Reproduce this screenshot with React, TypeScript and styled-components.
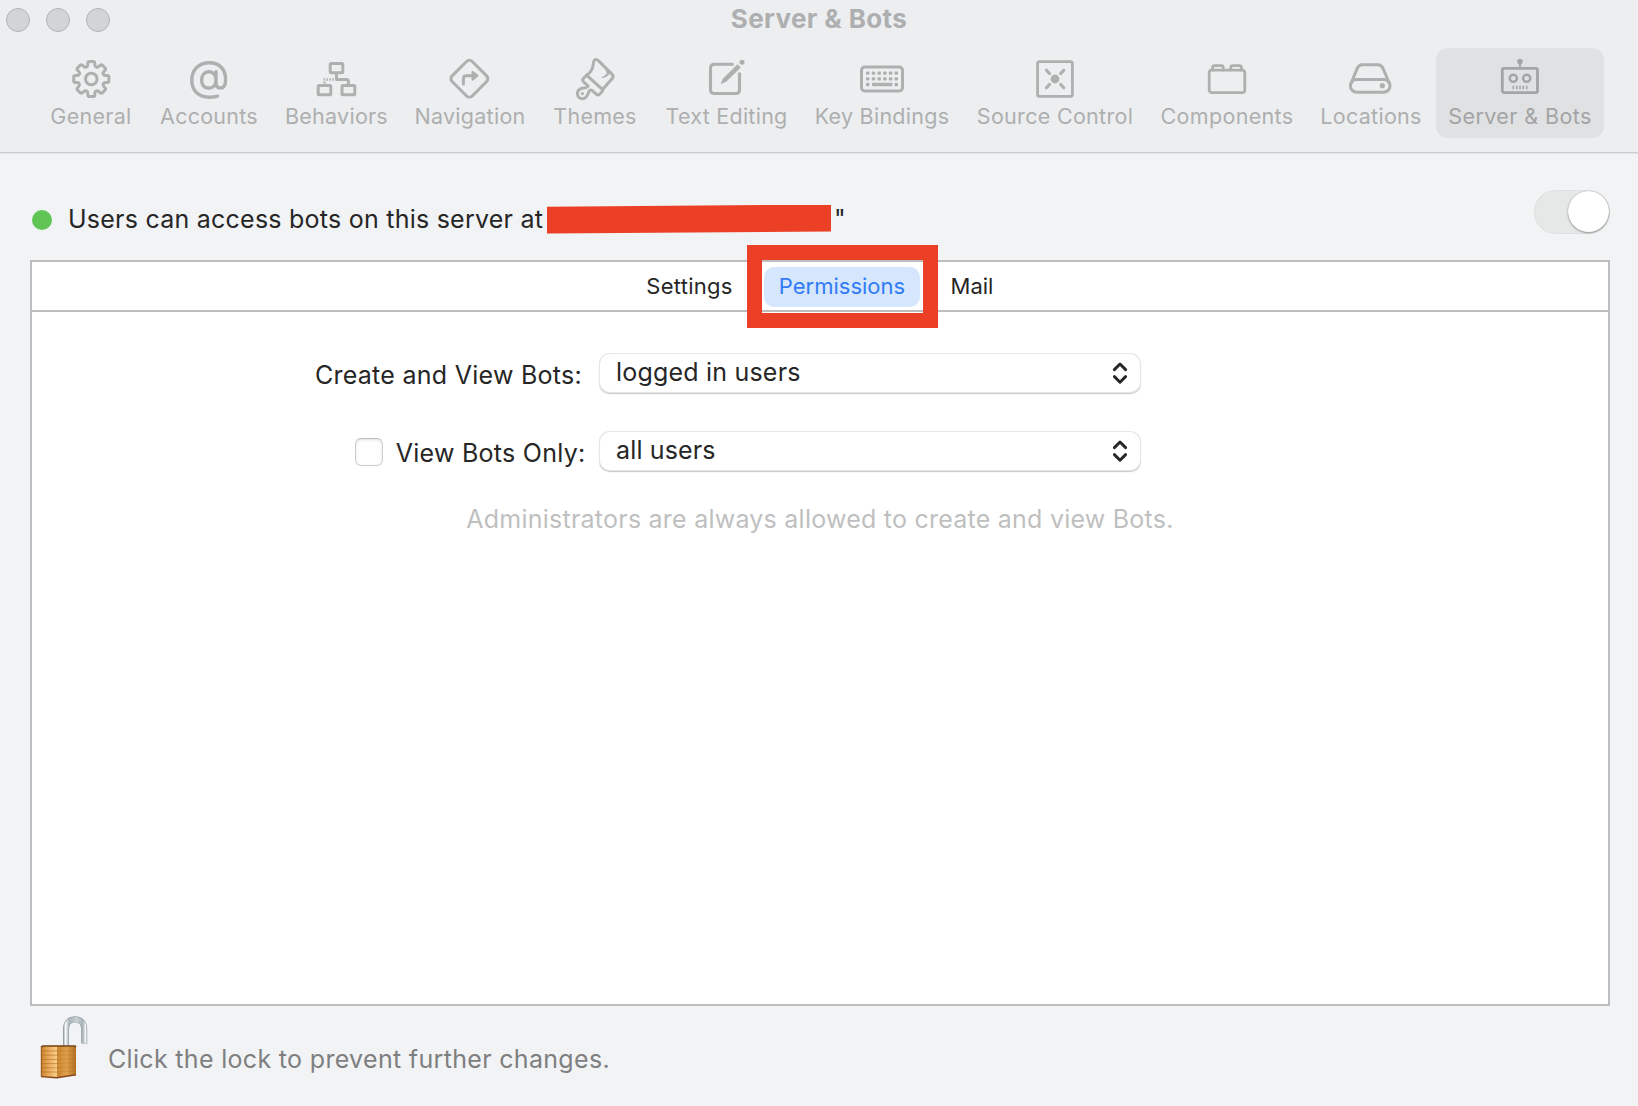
import React from "react";
import styled, { createGlobalStyle } from "styled-components";

const GlobalStyle = createGlobalStyle`
  * { box-sizing: border-box; }
  body {
    margin: 0;
    background: #f2f3f5;
    font-family: Inter, "Liberation Sans", sans-serif;
    color: #262626;
  }
`;

const Window = styled.div`
  display: flex;
  flex-direction: column;
  width: 1638px;
  height: 1106px;
  overflow: hidden;
  background: #f2f3f5;
`;

const Header = styled.header`
  height: 154px;
  background: #edeef0;
  border-bottom: 1px solid #e4e5e7;
  box-shadow: inset 0 -1px 0 #cbccce;
`;

const TitleBar = styled.div`
  display: grid;
  grid-template-columns: 1fr auto 1fr;
  height: 48px;
`;

const TrafficLights = styled.div`
  display: flex;
  gap: 16px;
  padding: 8px 0 0 6px;
`;

const Light = styled.span`
  width: 24px;
  height: 24px;
  border-radius: 50%;
  background: #d3d4d6;
  border: 1px solid #b3b4b5;
`;

const Title = styled.h1`
  margin: 0;
  font-size: 26px;
  font-weight: 700;
  line-height: 38px;
  letter-spacing: 0.37px;
  color: #aeafb0;
`;

const Toolbar = styled.nav`
  display: flex;
  padding-left: 36px;
`;

const ToolbarItem = styled.button<{ $width: number; $selected?: boolean }>`
  display: flex;
  flex-direction: column;
  align-items: center;
  flex: none;
  width: ${(p) => p.$width}px;
  height: 90px;
  padding: 7px 0 0;
  border: 0;
  border-radius: 12px;
  background: ${(p) => (p.$selected ? "#e0e1e3" : "transparent")};
  color: ${(p) => (p.$selected ? "#a3a4a5" : "#aeafaf")};
  font-family: inherit;
`;

const ToolbarIcon = styled.svg`
  display: block;
  flex: none;
  width: 48px;
  height: 48px;
  fill: none;
  stroke: currentColor;
  stroke-width: 3;
  stroke-linecap: round;
  stroke-linejoin: round;
`;

const ToolbarLabel = styled.span<{ $spacing: number }>`
  margin-top: -1px;
  font-size: 21.5px;
  line-height: 28px;
  letter-spacing: ${(p) => p.$spacing}px;
  white-space: nowrap;
`;

const StatusRow = styled.div`
  display: flex;
  justify-content: space-between;
  height: 106px;
  padding: 36px 28px 0 32px;
`;

const StatusText = styled.div`
  display: flex;
  align-items: center;
  height: 30px;
  margin-top: 14px;
  font-size: 25px;
  line-height: 30px;
  white-space: nowrap;
`;

const StatusDot = styled.span`
  width: 20px;
  height: 20px;
  margin: 2px 16px 0 0;
  border-radius: 50%;
  background: #61c555;
`;

const StatusMessage = styled.span`
  width: 479px;
  letter-spacing: 0.24px;
`;

const Redaction = styled.span`
  width: 284px;
  height: 29px;
  margin-right: 3px;
  background: #eb4025;
  clip-path: polygon(0 8%, 100% 0, 100% 93%, 0 100%);
`;

const Toggle = styled.div`
  display: flex;
  justify-content: flex-end;
  width: 76px;
  height: 44px;
  padding: 1px;
  border-radius: 22px;
  background: #e6e8e7;
  box-shadow: inset 0 0 0 1px #dfe1e0;
`;

const Knob = styled.span`
  width: 41px;
  height: 41px;
  border-radius: 50%;
  background: #fff;
  box-shadow: 0 1px 2px rgba(0, 0, 0, 0.35), 0 0 1px rgba(0, 0, 0, 0.3);
`;

const Panel = styled.main`
  width: 1580px;
  height: 746px;
  margin-left: 30px;
  border: 2px solid #bdbdbd;
  background: #fff;
`;

const TabBar = styled.div`
  display: flex;
  gap: 17px;
  height: 50px;
  padding: 5px 0 0 600px;
  border-bottom: 2px solid #bdbdbd;
`;

const Tab = styled.div<{ $width: number; $active?: boolean; $spacing: number }>`
  position: relative;
  width: ${(p) => p.$width}px;
  height: 40px;
  border-radius: 10px;
  background: ${(p) => (p.$active ? "#d5e6fd" : "transparent")};
  color: ${(p) => (p.$active ? "#317cf6" : "#262626")};
  font-size: 22px;
  line-height: 38px;
  letter-spacing: ${(p) => p.$spacing}px;
  text-align: center;
  white-space: nowrap;
`;

const Highlight = styled.span`
  position: absolute;
  top: -22px;
  left: -17px;
  width: 191px;
  height: 83px;
  border: 15px solid #eb4025;
`;

const Form = styled.div`
  display: flex;
  flex-direction: column;
  gap: 38px;
  padding-top: 41px;
  font-size: 25px;
`;

const FormRow = styled.div`
  display: grid;
  grid-template-columns: 568px 540px;
  height: 40px;
`;

const FieldLabel = styled.label<{ $end: number; $spacing: number }>`
  display: flex;
  justify-content: flex-end;
  padding: 4px ${(p) => p.$end}px 0 0;
  line-height: 36px;
  letter-spacing: ${(p) => p.$spacing}px;
  white-space: nowrap;
`;

const Checkbox = styled.span`
  width: 28px;
  height: 28px;
  margin: 3px 13px 0 0;
  border: 1px solid #cfcfcf;
  border-top-color: #bcbcbc;
  border-radius: 6px;
  background: #fff;
  box-shadow: inset 0 1px 3px rgba(0, 0, 0, 0.13);
`;

const Select = styled.div<{ $spacing: number }>`
  display: flex;
  justify-content: space-between;
  height: 38px;
  margin-top: 1px;
  padding: 0 12px 0 16px;
  border-radius: 10px;
  background: #fff;
  box-shadow: 0 0 0 1px #e6e6e6, 0 1px 1px 0.5px rgba(0, 0, 0, 0.18),
    0 2px 2px rgba(0, 0, 0, 0.06);
  line-height: 36px;
  letter-spacing: ${(p) => p.$spacing}px;
`;

const Chevrons = styled.svg`
  width: 16px;
  height: 24px;
  margin-top: 7px;
  fill: none;
  stroke: #262626;
  stroke-width: 2.9;
  stroke-linecap: round;
  stroke-linejoin: round;
`;

const Note = styled.p`
  margin: 33px 0 0;
  color: #bfbfbf;
  font-size: 25px;
  line-height: 30px;
  letter-spacing: 0.235px;
  text-align: center;
`;

const Footer = styled.footer`
  display: flex;
  padding: 8px 0 0 38px;
`;

const LockIcon = styled.svg`
  display: block;
  width: 52px;
  height: 68px;
`;

const FooterText = styled.span`
  margin: 30px 0 0 18px;
  color: #7e7f80;
  font-size: 25px;
  line-height: 30px;
  letter-spacing: 0.32px;
`;

/* Closed outline of an eight-toothed gear with softened corners. */
function gearPath(cx: number, cy: number) {
  const pts: [number, number][] = [];
  for (let i = 0; i < 8; i++) {
    const base = i * 45 - 90;
    const add = (r: number, d: number) => {
      const a = ((base + d) * Math.PI) / 180;
      pts.push([cx + r * Math.cos(a), cy + r * Math.sin(a)]);
    };
    add(13, -16);
    add(17.9, -11);
    add(17.9, 11);
    add(13, 16);
  }
  const n = pts.length;
  let d = "";
  pts.forEach((p, i) => {
    const a = pts[(i + n - 1) % n];
    const b = pts[(i + 1) % n];
    const toward = (q: [number, number]) => {
      const k = Math.min(0.5, 1.7 / Math.hypot(q[0] - p[0], q[1] - p[1]));
      return `${(p[0] + (q[0] - p[0]) * k).toFixed(2)} ${(p[1] + (q[1] - p[1]) * k).toFixed(2)}`;
    };
    d += `${i ? "L" : "M"}${toward(a)}Q${p[0].toFixed(2)} ${p[1].toFixed(2)} ${toward(b)}`;
  });
  return d + "Z";
}

const solid = { fill: "currentColor", stroke: "none" };

const icons: Record<string, React.ReactNode> = {
  gear: (
    <>
      <path d={gearPath(24.3, 24)} />
      <circle cx="24.3" cy="24" r="5.8" />
    </>
  ),
  at: (
    <path
      strokeWidth="3.4"
      d="M31 16.6V27.5C31 31 32.8 33 35.4 33C39 33 40.6 29.5 40.6 24.4C40.6 14.2 34.2 7.8 24.6 7.8C13.8 7.8 6.8 14.6 6.8 25.2C6.8 36 13.8 42.2 24.6 42.2C28 42.2 31 41.8 32.6 41.2M31 25C31 30 28.3 33.2 23.8 33.2C19.4 33.2 16.6 30.1 16.6 25C16.6 20 19.5 16.8 23.9 16.8C28.3 16.8 31 20 31 25Z"
    />
  ),
  behaviors: (
    <>
      <rect x="17.2" y="8.4" width="12.6" height="9.4" rx="1" />
      <rect x="5.2" y="30.4" width="12.6" height="9.4" rx="1" />
      <rect x="29" y="30.4" width="12.8" height="9.4" rx="1" />
      <path d="M23.5 18V24.4H33.5Q35.4 24.4 35.4 26.4V30" strokeLinecap="butt" />
      <path d="M10.6 24.4H22" strokeLinecap="butt" strokeDasharray="1.5 1.4" strokeWidth="2.5" />
      <path d="M11.5 26.8V28.4" strokeLinecap="butt" strokeWidth="2.6" />
    </>
  ),
  navigation: (
    <>
      <rect x="9.2" y="9.5" width="28.4" height="28.4" rx="4" transform="rotate(45 23.4 23.7)" />
      <path d="M17.4 29V23.5Q17.4 20.7 20.2 20.7H26" />
      <path d="M26.6 17L31.4 20.7L26.6 24.6Z" fill="currentColor" strokeWidth="2.2" />
    </>
  ),
  brush: (
    <>
      <path d="M15.6 20.2C20.5 17.5 22 12.5 22.4 8.2C22.8 4.6 24.9 3.2 27.6 5.8L41.2 19.4C42.6 20.9 42.6 22 41.2 23.4L31.6 34.6" />
      <path d="M15.6 20.2L12.4 23.5Q11 25.2 12.6 26.8L17.2 31C16.4 33 14 33 11.2 33.3C8.4 34 6.4 36 6.4 38.8C6.4 41.6 8.6 43.7 11.4 43.7C15.2 43.7 16.6 40.6 17.6 37.4C18.2 35.4 19.4 34.4 20.8 35.2L25.2 39.2Q27 40.8 28.6 39.2L31.6 36V34.6Z" />
      <path d="M31.2 22.6Q34.4 21.6 36.6 18.4L34.6 13.6L38.6 17.6Q35.8 21.6 31.2 22.6Z" fill="currentColor" strokeWidth="1.2" />
      <circle cx="11.4" cy="38.6" r="1.6" style={solid} />
    </>
  ),
  compose: (
    <>
      <path d="M30.6 9.3H11.6Q7.5 9.3 7.5 13.4V34.4Q7.5 38.5 11.6 38.5H32.4Q36.5 38.5 36.5 34.4V17.4" strokeLinecap="butt" strokeWidth="3.1" />
      <path d="M17.6 29L20 23.6L34.6 9.2L37.8 12.4L23.2 26.8Z" style={solid} />
      <circle cx="39" cy="7.3" r="2.5" style={solid} />
    </>
  ),
  keyboard: (
    <>
      <rect x="3.5" y="12.1" width="41" height="23.8" rx="3.2" />
      <g style={solid}>
        {[18.1, 23.9].map((y) =>
          [9.7, 15.5, 21.2, 26.9, 32.6, 38.3].map((x) => (
            <rect key={`${x}-${y}`} x={x - 1.7} y={y - 1.7} width="3.4" height="3.4" rx="0.8" />
          ))
        )}
        <rect x="8" y="27.8" width="3.4" height="3.4" rx="0.8" />
        <rect x="14" y="27.8" width="20.4" height="3.4" rx="0.8" />
        <rect x="36.6" y="27.8" width="3.4" height="3.4" rx="0.8" />
      </g>
    </>
  ),
  source: (
    <>
      <rect x="6.6" y="6.6" width="34.8" height="34.8" rx="2" strokeWidth="2.8" />
      <circle cx="24" cy="24" r="4.4" style={solid} />
      <path d="M15.4 15.2L18.6 18.6M32.8 15.2L29.6 18.6M15.4 32.8L18.6 29.4M32.8 32.8L29.6 29.4" />
    </>
  ),
  components: (
    <>
      <rect x="6.2" y="15.2" width="35.6" height="22.4" rx="2.6" strokeWidth="2.8" />
      <path d="M9.6 15V12.4Q9.6 10.6 11.4 10.6H18.4Q20.2 10.6 20.2 12.4V15M27.8 15V12.4Q27.8 10.6 29.6 10.6H36.6Q38.4 10.6 38.4 12.4V15" strokeWidth="2.8" />
    </>
  ),
  drive: (
    <>
      <path d="M4.2 28L10.2 13.4Q11.8 9.7 15.2 9.7H31Q34.4 9.7 36 13.4L42.2 28" />
      <rect x="3.4" y="24.4" width="39.6" height="12.9" rx="6.4" />
      <circle cx="35.3" cy="30.7" r="2.6" style={solid} />
    </>
  ),
  robot: (
    <>
      <rect x="6.3" y="13.4" width="35.2" height="24.2" rx="1.8" strokeWidth="2.8" />
      <path d="M24 7V13" strokeWidth="2.2" />
      <circle cx="24" cy="6.4" r="2.7" style={solid} />
      <circle cx="17.3" cy="23.3" r="3.6" strokeWidth="2.4" />
      <circle cx="30.7" cy="23.3" r="3.6" strokeWidth="2.4" />
      <path d="M17.3 30.8V34.2M20.7 30.8V34.2M24 30.8V34.2M27.3 30.8V34.2M30.7 30.8V34.2" strokeWidth="1.5" strokeLinecap="butt" />
    </>
  ),
};

const items = [
  { label: "General", icon: "gear", width: 110, spacing: 0.3 },
  { label: "Accounts", icon: "at", width: 126, spacing: 0.25 },
  { label: "Behaviors", icon: "behaviors", width: 129, spacing: 0.25 },
  { label: "Navigation", icon: "navigation", width: 138, spacing: 0.28 },
  { label: "Themes", icon: "brush", width: 112, spacing: 0.25 },
  { label: "Text Editing", icon: "compose", width: 151, spacing: 0.27 },
  { label: "Key Bindings", icon: "keyboard", width: 160, spacing: 0.27 },
  { label: "Source Control", icon: "source", width: 186, spacing: 0.3 },
  { label: "Components", icon: "components", width: 158, spacing: 0.33 },
  { label: "Locations", icon: "drive", width: 130, spacing: 0.3 },
  { label: "Server & Bots", icon: "robot", width: 168, spacing: 0.4, selected: true },
];

function PopUp({ value, spacing }: { value: string; spacing: number }) {
  return (
    <Select $spacing={spacing}>
      <span>{value}</span>
      <Chevrons viewBox="0 0 16 24">
        <path d="M2.4 8.6L8 3L13.6 8.6M2.4 15.6L8 21.2L13.6 15.6" />
      </Chevrons>
    </Select>
  );
}

function OpenPadlock() {
  return (
    <LockIcon viewBox="0 0 52 68">
      <defs>
        <linearGradient id="steel" x1="25" x2="50" y1="0" y2="0" gradientUnits="userSpaceOnUse">
          <stop offset="0" stopColor="#8b979e" />
          <stop offset="0.1" stopColor="#f4f7f8" />
          <stop offset="0.25" stopColor="#aab5ba" />
          <stop offset="0.55" stopColor="#c9d1d5" />
          <stop offset="0.8" stopColor="#a8b3b8" />
          <stop offset="0.9" stopColor="#f8fafa" />
          <stop offset="1" stopColor="#a8b2b7" />
        </linearGradient>
        <linearGradient id="front" x1="0" x2="1" y1="0" y2="0">
          <stop offset="0" stopColor="#c9822f" />
          <stop offset="0.5" stopColor="#e9ac5c" />
          <stop offset="1" stopColor="#fad08a" />
        </linearGradient>
        <linearGradient id="side" x1="0" x2="1" y1="0" y2="0">
          <stop offset="0" stopColor="#c98430" />
          <stop offset="0.5" stopColor="#dfa04a" />
          <stop offset="1" stopColor="#b46f23" />
        </linearGradient>
      </defs>
      <path d="M28 34V15.5C28 8.5 31.5 5.3 37 5.3C42.8 5.3 46.2 9.2 46.2 15.5V29.6" fill="none" stroke="#8e9aa1" strokeWidth="6" />
      <path d="M28 34V15.5C28 8.5 31.5 5.3 37 5.3C42.8 5.3 46.2 9.2 46.2 15.5V28.9" fill="none" stroke="url(#steel)" strokeWidth="4.8" />
      <path d="M3 32.4L19 32V63.8L3 62.8Z" fill="url(#front)" />
      <path d="M19 32L38 32.6V61L19 63.8Z" fill="url(#side)" />
      <path
        d="M3 37H19M3 41.2H19M3 45.4H19M3 49.6H19M3 53.8H19M3 58H19"
        fill="none"
        stroke="#a35f1b"
        strokeOpacity="0.5"
        strokeWidth="1"
      />
      <path
        d="M19 37L38 36.8M19 41.2L38 40.8M19 45.4L38 44.8M19 49.6L38 48.8M19 53.8L38 52.8M19 58L38 56.8"
        fill="none"
        stroke="#9a5a18"
        strokeOpacity="0.22"
        strokeWidth="1"
      />
      <path d="M3 33L5 32H37L38 33" fill="none" stroke="#74400f" strokeWidth="1.6" />
      <path d="M3 62.6L19 63.7L38 60.8" fill="none" stroke="#84481a" strokeWidth="1.4" />
      <path d="M3.3 32.5V62.5" stroke="#99581f" strokeWidth="1" />
    </LockIcon>
  );
}

export default function App() {
  return (
    <>
      <GlobalStyle />
      <Window>
        <Header>
          <TitleBar>
            <TrafficLights>
              <Light />
              <Light />
              <Light />
            </TrafficLights>
            <Title>Server &amp; Bots</Title>
          </TitleBar>
          <Toolbar>
            {items.map((it) => (
              <ToolbarItem key={it.label} $width={it.width} $selected={it.selected}>
                <ToolbarIcon viewBox="0 0 48 48">{icons[it.icon]}</ToolbarIcon>
                <ToolbarLabel $spacing={it.spacing}>{it.label}</ToolbarLabel>
              </ToolbarItem>
            ))}
          </Toolbar>
        </Header>
        <StatusRow>
          <StatusText>
            <StatusDot />
            <StatusMessage>Users can access bots on this server at</StatusMessage>
            <Redaction />
            <span>"</span>
          </StatusText>
          <Toggle>
            <Knob />
          </Toggle>
        </StatusRow>
        <Panel>
          <TabBar>
            <Tab $width={115} $spacing={0.26}>Settings</Tab>
            <Tab $width={156} $spacing={0} $active>
              Permissions
              <Highlight />
            </Tab>
            <Tab $width={70} $spacing={0}>Mail</Tab>
          </TabBar>
          <Form>
            <FormRow>
              <FieldLabel $end={18} $spacing={0.27}>Create and View Bots:</FieldLabel>
              <PopUp value="logged in users" spacing={0.2} />
            </FormRow>
            <FormRow>
              <FieldLabel $end={14.5} $spacing={0.27}>
                <Checkbox />
                View Bots Only:
              </FieldLabel>
              <PopUp value="all users" spacing={0.15} />
            </FormRow>
          </Form>
          <Note>Administrators are always allowed to create and view Bots.</Note>
        </Panel>
        <Footer>
          <OpenPadlock />
          <FooterText>Click the lock to prevent further changes.</FooterText>
        </Footer>
      </Window>
    </>
  );
}
